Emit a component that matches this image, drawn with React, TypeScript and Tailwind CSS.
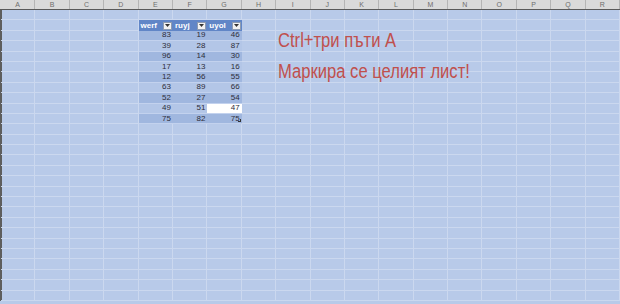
import React from "react";

const cols = ["A", "B", "C", "D", "E", "F", "G", "H", "I", "J", "K", "L", "M", "N", "O", "P", "Q", "R"];
const rows = Array.from({ length: 28 }, (_, i) => i);

const data = [
  [83, 19, 46],
  [39, 28, 87],
  [96, 14, 30],
  [17, 13, 16],
  [12, 56, 55],
  [63, 89, 66],
  [52, 27, 54],
  [49, 51, 47],
  [75, 82, 75],
];

const Drop = () => (
  <span className="flex h-[8px] w-[9px] items-center justify-center border border-[#8d9bb0] bg-[#f2f2f2]">
    <svg width="5" height="3" viewBox="0 0 5 3">
      <path d="M0 0h5L2.5 3z" fill="#333" />
    </svg>
  </span>
);

const App = () => {
  return (
    <div
      className="relative h-[304px] w-[620px] overflow-hidden bg-[#b8cae9]"
      style={{ fontFamily: '"Liberation Sans", Arial, sans-serif' }}
    >
      {/* column header */}
      <div className="flex h-[10px] border-b border-[#5a5a5a] bg-[#dadada] pl-[1px]">
        {cols.map((c) => (
          <div
            key={c}
            className="flex w-[34.4px] shrink-0 items-center justify-center border-r border-[#b5b5b5] text-[7px] leading-none text-[#6e6e6e]"
          >
            {c}
          </div>
        ))}
      </div>

      <div className="flex">
        <div className="w-[2px] shrink-0 bg-[#5e5e5e]" />
        <div className="-ml-[1px] grid grid-cols-[repeat(18,34.4px)] grid-rows-[repeat(28,10.4px)]">
          {rows.map((r) =>
            cols.map((c, ci) => {
              const tr = r - 1;
              const tc = ci - 4;
              if (tr >= 0 && tr <= 9 && tc >= 0 && tc <= 2) {
                if (tr === 0) {
                  const name = ["werf", "ruyj", "uyol"][tc];
                  return (
                    <div
                      key={c + r}
                      className="flex items-center justify-between bg-[#6186c7] pl-[2px] pr-[1px] text-[8px] font-bold leading-none text-white"
                    >
                      <span>{name}</span>
                      <Drop />
                    </div>
                  );
                }
                const v = data[tr - 1][tc];
                const white = tr === 8 && tc === 2;
                const band = tr % 2 === 1 ? "bg-[#a0b7df]" : "bg-[#b3c6e7]";
                return (
                  <div
                    key={c + r}
                    className={`relative flex items-center justify-end border-b border-[#c3d2ee] pr-[2px] text-[8px] leading-none text-[#2d2d3a] ${
                      white ? "bg-white" : band
                    }`}
                  >
                    {v}
                    {tr === 9 && tc === 2 && (
                      <span className="absolute bottom-[1px] right-[1px] h-[3px] w-[3px] border-b border-r border-[#333]" />
                    )}
                  </div>
                );
              }
              return <div key={c + r} className="border-b border-r border-[#cbd8ef]" />;
            })
          )}
        </div>
      </div>

      {/* text box */}
      <div
        className="absolute left-[278px] top-[25px] origin-left scale-x-[0.83] text-[20px] leading-[31px] text-[#c0504d]"
        style={{ fontFamily: '"Liberation Sans", sans-serif' }}
      >
        <div className="whitespace-nowrap">Ctrl+три пъти А</div>
        <div className="whitespace-nowrap">Маркира се целият лист!</div>
      </div>
    </div>
  );
};

export default App;
